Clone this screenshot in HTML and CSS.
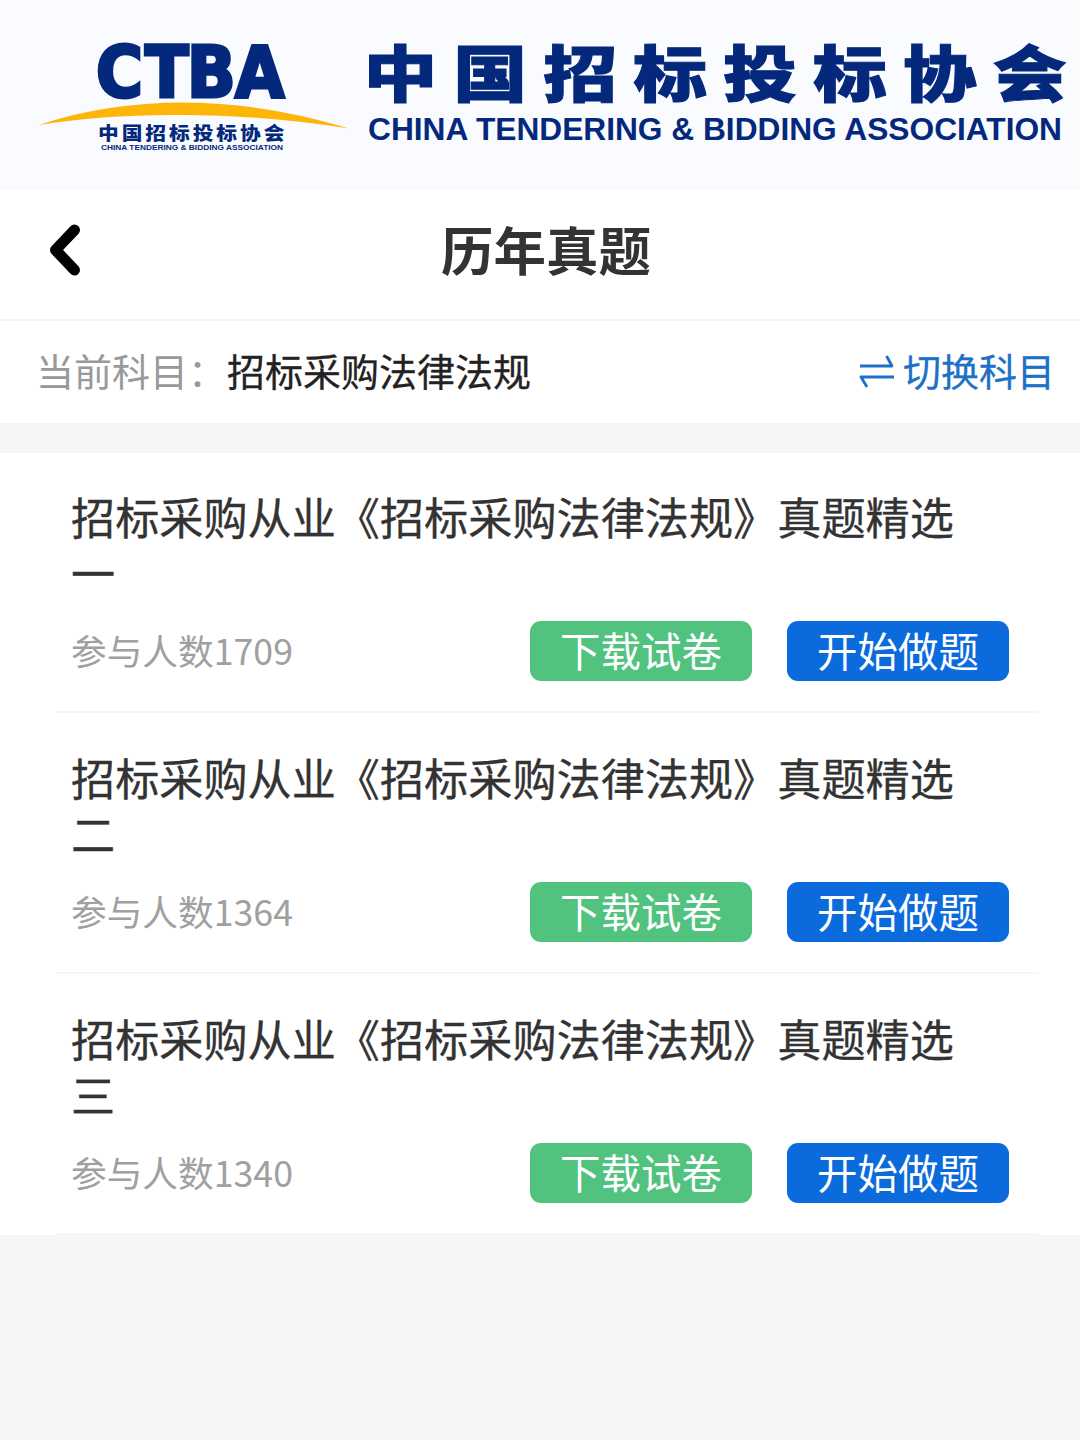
FILE: index.html
```html
<!DOCTYPE html>
<html lang="zh-CN">
<head>
    <meta charset="UTF-8">
    <title>历年真题</title>
    <meta name="viewport" content="width=device-width">
    <link rel="stylesheet" href="styles.css">
</head>
<body>
    <div class="banner">
        <svg class="banner-logo" width="1080" height="190" viewBox="0 0 1080 190">
            <text class="logo-ctba" x="96 145 187 235" y="97">CTBA</text>
            <path class="logo-arc" d="M39 125 Q105 102.500 185 102.500 Q265 103 349 128.500 Q262 115 185 115 Q105 114 39 125Z"/>
            <text class="logo-cn" transform="translate(98 139.500) scale(1.15 1)">中国招标投标协会</text>
            <text class="logo-en" x="101" y="149.500" textLength="182" lengthAdjust="spacingAndGlyphs">CHINA TENDERING &amp; BIDDING ASSOCIATION</text>
            <text class="name-cn" transform="translate(363.500 96.500) scale(1.2 1)" x="0 74.900 149.800 224.700 299.600 374.500 449.400 524.300">中国招标投标协会</text>
            <text class="name-en" x="368" y="139.500" textLength="694" lengthAdjust="spacingAndGlyphs">CHINA TENDERING &amp; BIDDING ASSOCIATION</text>
        </svg>
    </div>

    <header class="top-bar">
        <a href="#" class="back" aria-label="返回">
            <svg width="34" height="54" viewBox="0 0 34 54">
                <path d="M27.500 7 L8.500 27 L27.500 47"/>
            </svg>
        </a>
        <h1>历年真题</h1>
    </header>

    <div class="subject">
        <span class="subject-label">当前科目：</span>
        <span class="subject-name">招标采购法律法规</span>
        <a href="#" class="subject-switch">
            <svg width="36" height="36" viewBox="0 0 36 36">
                <path d="M1 14 H33 L27.500 4 M35 25 H2 L8 35"/>
            </svg>
            切换科目
        </a>
    </div>

    <ul class="papers">
        <li class="paper">
            <h2>招标采购从业《招标采购法律法规》真题精选一</h2>
            <div class="paper-row">
                <span class="paper-count">参与人数1709</span>
                <button class="btn btn-download">下载试卷</button>
                <button class="btn btn-start">开始做题</button>
            </div>
        </li>
        <li class="paper">
            <h2>招标采购从业《招标采购法律法规》真题精选二</h2>
            <div class="paper-row">
                <span class="paper-count">参与人数1364</span>
                <button class="btn btn-download">下载试卷</button>
                <button class="btn btn-start">开始做题</button>
            </div>
        </li>
        <li class="paper">
            <h2>招标采购从业《招标采购法律法规》真题精选三</h2>
            <div class="paper-row">
                <span class="paper-count">参与人数1340</span>
                <button class="btn btn-download">下载试卷</button>
                <button class="btn btn-start">开始做题</button>
            </div>
        </li>
    </ul>
</body>
</html>
```
FILE: styles.css
```css
*,
*::after,
*::before{
    padding: 0;
    margin: 0;
    box-sizing: border-box;
}
body{
    min-height: 1440px;
    font-family: "Noto Sans CJK SC", sans-serif;
    color: #333;
    background-color: #f6f6f4;
}
a{
    text-decoration: none;
}

/* banner */
.banner{
    height: 190px;
    background-color: #f9fbff;
}
.banner-logo{
    display: block;
    fill: #04297c;
}
.logo-ctba{
    font: bold 71px "DejaVu Sans Condensed", "DejaVu Sans", sans-serif;
    font-stretch: condensed;
    stroke: #04297c;
    stroke-width: 3px;
}
.logo-arc{
    fill: #fdb508;
}
.logo-cn{
    font-size: 18px;
    font-weight: 900;
    letter-spacing: 2.6px;
}
.logo-en{
    font: bold 8px "Liberation Sans", sans-serif;
}
.name-cn{
    font-size: 61.5px;
    font-weight: 900;
    stroke: #04297c;
    stroke-width: 1px;
}
.name-en{
    font: bold 31.5px "Liberation Sans", sans-serif;
}

/* title bar */
.top-bar{
    display: grid;
    grid-template-columns: 120px 1fr 120px;
    align-items: center;
    height: 131px;
    padding: 0 0 10px 12px;
    background-color: #fff;
    border-bottom: 2px solid #f3f3f3;
}
.back{
    padding-left: 35px;
}
.back svg{
    display: block;
    fill: none;
    stroke: #000;
    stroke-width: 11px;
    stroke-linecap: round;
    stroke-linejoin: round;
}
h1{
    padding-bottom: 3px;
    font-size: 52.5px;
    line-height: 76px;
    text-align: center;
}

/* current subject */
.subject{
    display: flex;
    align-items: center;
    height: 102px;
    padding: 0 25px 5px 36px;
    font-size: 38px;
    background-color: #fff;
}
.subject-label{
    width: 191px;
    color: #999;
}
.subject-name{
    color: #222;
    -webkit-text-stroke: 0.3px;
}
.subject-switch{
    display: flex;
    align-items: center;
    gap: 8px;
    margin-left: auto;
    color: #1d70c8;
    -webkit-text-stroke: 0.3px;
}
.subject-switch svg{
    fill: none;
    stroke: #1d70c8;
    stroke-width: 2.8px;
    stroke-linejoin: round;
}

/* paper list */
.papers{
    display: grid;
    gap: 1px;
    margin-top: 30px;
    padding: 0 41px 0 56px;
    list-style: none;
    background-color: #fff;
}
.paper{
    padding: 35px 30px 30px 15px;
    border-bottom: 2px solid #f6f6f6;
}
.paper h2{
    width: 900px;
    font-size: 44.15px;
    font-weight: normal;
    line-height: 56px;
    -webkit-text-stroke: 0.3px;
}
.paper-row{
    display: flex;
    align-items: center;
    gap: 35px;
    margin-top: 21px;
}
.paper-count{
    flex: 1;
    font-size: 35.7px;
    line-height: 58px;
    padding-bottom: 2px;
    color: #a0a0a0;
}
.btn{
    width: 222px;
    height: 60px;
    padding-bottom: 3px;
    border: none;
    border-radius: 11px;
    font-family: inherit;
    font-size: 40.5px;
    line-height: 57px;
    color: #fff;
    cursor: pointer;
}
.btn-download{
    background-color: #51c37f;
}
.btn-start{
    background-color: #0b6bdd;
}
```
